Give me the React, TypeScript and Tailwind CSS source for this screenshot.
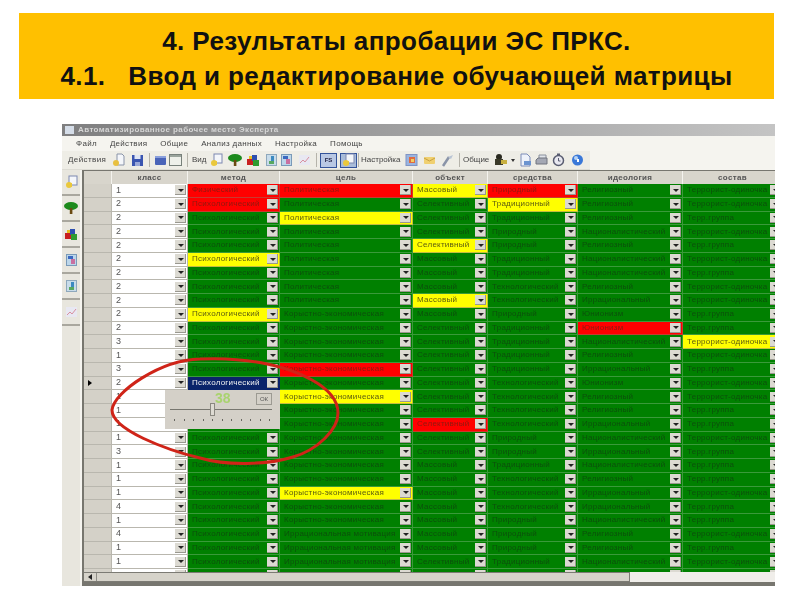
import React from "react";

const P = "Психологический";
const POL = "Политическая";
const KOR = "Корыстно-экономическая";
const IM = "Иррациональная мотивация";
const SEL = "Селективный";
const MAS = "Массовый";
const TR = "Традиционный";
const PR = "Природный";
const TE = "Технологический";
const RE = "Религиозный";
const NA = "Националистический";
const IR = "Иррациональный";
const YU = "Юнионизм";
const TO = "Террорист-одиночка";
const TG = "Терр.группа";

// text, then :r / :y / :n when the cell is not plain green
const rows: string[][] = [
  ["1", "Физический:r", POL + ":r", MAS + ":y", PR + ":r", RE, TO],
  ["2", P + ":r", POL, SEL, TR + ":y", RE, TO],
  ["2", P, POL + ":y", SEL, TR, RE, TG],
  ["2", P, POL, SEL, PR, NA, TO],
  ["2", P, POL, SEL + ":y", PR, RE, TG],
  ["2", P + ":y", POL, MAS, TR, NA, TO],
  ["2", P, POL, MAS, TR, NA, TG],
  ["2", P, POL, MAS, TE, RE, TO],
  ["2", P, POL, MAS + ":y", TE, IR, TO],
  ["2", P + ":y", KOR, MAS, PR, YU, TG],
  ["2", P, KOR, SEL, TR, YU + ":r", TG],
  ["3", P, KOR, SEL, TR, NA, TO + ":y"],
  ["1", P, KOR, SEL, TR, RE, TO],
  ["3", P, KOR + ":r", SEL, TR, IR, TG],
  ["2", P + ":n", KOR, SEL, TE, YU, TO],
  ["1", P, KOR + ":y", SEL, TE, RE, TO],
  ["1", P, KOR, SEL, TE, RE, TG],
  ["1", P, KOR, SEL + ":r", TE, IR, TG],
  ["1", P, KOR, SEL, PR, NA, TO],
  ["3", P, KOR, SEL, PR, IR, TG],
  ["1", P, KOR, MAS, TR, NA, TG],
  ["1", P, KOR, MAS, TE, RE, TG],
  ["1", P, KOR + ":y", MAS, TE, IR, TO],
  ["4", P, KOR, MAS, TE, IR, TG],
  ["1", P, KOR, MAS, PR, NA, TG],
  ["4", P, IM, MAS, PR, RE, TO],
  ["1", P, IM, MAS, PR, RE, TG],
  ["1", P, IM, SEL, TR, NA, TO],
  ["", "", "", "", "", "", ""],
];

const headers = ["класс", "метод", "цель", "объект", "средства", "идеология", "состав"];
const gridCols = "grid grid-cols-[28px_76px_92px_133px_75px_90px_105px_100px]";

const cellStyles: Record<string, string> = {
  g: "bg-[#008000] text-[#0b4f0b] border-[#3a9a3a]",
  r: "bg-[#ff0000] text-[#8c1a10] border-[#c83a30]",
  y: "bg-[#ffff00] text-[#5c5c10] border-[#c4bc40]",
  n: "bg-[#0a246a] text-[#f2f2f2] border-[#0a246a]",
};

const Arrow = () => (
  <span className="ml-auto flex h-[10px] w-[11px] shrink-0 items-center justify-center bg-[#dcdad2] shadow-[inset_-1px_-1px_0_#9a988f]">
    <span className="h-0 w-0 border-x-[3px] border-t-[3px] border-x-transparent border-t-[#222]" />
  </span>
);

const Cell = ({ value }: { value: string }) => {
  const [text, kind = "g"] = value.split(":");
  return (
    <div className={`flex items-center overflow-hidden border-r border-b pl-[4px] pr-[1px] ${cellStyles[kind]}`}>
      <span className="whitespace-nowrap text-[8px] tracking-[0.25px]">{text}</span>
      <Arrow />
    </div>
  );
};

type IconProps = { className?: string };

const Ico = ({ className, children, w = 13 }: IconProps & { children: React.ReactNode; w?: number }) => (
  <svg className={`shrink-0 ${className ?? ""}`} width={w} height="14" viewBox={`0 0 ${w} 14`}>
    {children}
  </svg>
);

const OpenDoc = (p: IconProps) => (
  <Ico {...p}>
    <path d="M5 1h5l2 2v9H5z" fill="#f4f6fa" stroke="#8a94a8" />
    <circle cx="4" cy="10" r="3" fill="#e8c040" />
  </Ico>
);
const Save = (p: IconProps) => (
  <Ico {...p}>
    <rect x="1" y="2" width="11" height="11" fill="#3a55b0" />
    <rect x="3.5" y="2" width="6" height="4" fill="#dfe6f4" />
    <rect x="4" y="9" width="5" height="4" fill="#9aa8d8" />
  </Ico>
);
const Card = (p: IconProps) => (
  <Ico {...p}>
    <rect x="1" y="3" width="11" height="9" rx="1" fill="#4a64b8" />
    <rect x="1" y="3" width="11" height="2" fill="#8aa0dc" />
  </Ico>
);
const Win = (p: IconProps) => (
  <Ico {...p}>
    <rect x="0.5" y="1.5" width="12" height="11" fill="#eef0ea" stroke="#77807a" />
    <rect x="1" y="2" width="11" height="2" fill="#9aa49c" />
  </Ico>
);
const Book = (p: IconProps) => (
  <Ico {...p}>
    <rect x="4" y="1" width="8" height="9" fill="#f4f6fa" stroke="#7c88b0" />
    <circle cx="4" cy="10" r="3" fill="#eac83c" />
    <rect x="2" y="8" width="5" height="4" fill="#eac83c" />
  </Ico>
);
const Tree = (p: IconProps) => (
  <Ico {...p} w={14}>
    <ellipse cx="7" cy="5" rx="7" ry="4" fill="#1c8a1c" />
    <rect x="5.8" y="7" width="2.6" height="6" fill="#6b4a12" />
  </Ico>
);
const Blocks = (p: IconProps) => (
  <Ico {...p} w={14}>
    <rect x="1" y="6" width="6" height="6" fill="#c82020" />
    <rect x="6" y="2" width="5" height="6" fill="#2d4fb0" />
    <rect x="7" y="7" width="6" height="6" fill="#2f9a30" />
    <rect x="3" y="3" width="3" height="3" fill="#e8c020" />
  </Ico>
);
const Grid1 = (p: IconProps) => (
  <Ico {...p}>
    <rect x="1.5" y="1.5" width="10" height="11" fill="#c8dcea" stroke="#8ea8bc" />
    <rect x="6" y="3" width="3" height="6" fill="#3c8ac0" />
    <rect x="4" y="8" width="5" height="3" fill="#58a860" />
  </Ico>
);
const Grid2 = (p: IconProps) => (
  <Ico {...p}>
    <rect x="1.5" y="1.5" width="10" height="11" fill="#bcd6ea" stroke="#7a9ab8" />
    <rect x="3" y="3" width="5" height="3" fill="#3a68c0" />
    <rect x="6" y="6" width="4" height="5" fill="#c870a0" />
  </Ico>
);
const Chart = (p: IconProps) => (
  <Ico {...p}>
    <rect x="1" y="2" width="11" height="10" fill="#e8e8f2" />
    <path d="M2 10l3-3 2 2 4-5" fill="none" stroke="#d890a0" />
  </Ico>
);
const Photo = (p: IconProps) => (
  <Ico {...p}>
    <rect x="1" y="1.5" width="11" height="11" fill="#9ab4e0" stroke="#7f94c4" />
    <rect x="4" y="4" width="6" height="6" fill="#e06c40" />
    <rect x="6" y="6" width="3" height="3" fill="#f0d060" />
  </Ico>
);
const Mail = (p: IconProps) => (
  <Ico {...p}>
    <rect x="1" y="4" width="11" height="7" rx="1" fill="#f0d070" />
    <path d="M1 5l5.5 3L12 5" fill="none" stroke="#c8a040" />
  </Ico>
);
const Wand = (p: IconProps) => (
  <Ico {...p}>
    <path d="M2 13L8 4" stroke="#8a94a8" strokeWidth="2.5" />
    <path d="M7 4l5-2-2 4z" fill="#b8c4d4" />
  </Ico>
);
const People = (p: IconProps) => (
  <Ico {...p} w={14}>
    <circle cx="5" cy="4" r="3" fill="#2a2a20" />
    <rect x="1" y="6" width="8" height="6" fill="#3a3a28" />
    <rect x="7" y="7" width="6" height="4" fill="#c8b040" />
  </Ico>
);
const Page = (p: IconProps) => (
  <Ico {...p}>
    <path d="M2 1h6l3 3v9H2z" fill="#eef2fa" stroke="#7c8cb8" />
    <rect x="5" y="8" width="7" height="4" fill="#6c94d0" />
  </Ico>
);
const Printer = (p: IconProps) => (
  <Ico {...p}>
    <path d="M4 2h7v4H4z" fill="#e0e4ea" stroke="#8a909c" />
    <path d="M1 7l2-2h9v6H1z" fill="#a4a8b4" stroke="#70747e" />
  </Ico>
);
const Clock = (p: IconProps) => (
  <Ico {...p}>
    <circle cx="6.5" cy="7.5" r="5" fill="#e8e8f0" stroke="#585c70" strokeWidth="1.5" />
    <rect x="5" y="0.5" width="3" height="2" fill="#585c70" />
    <path d="M6.5 5v3h2" fill="none" stroke="#585c70" />
  </Ico>
);
const Help = (p: IconProps) => (
  <Ico {...p}>
    <circle cx="6.5" cy="7" r="5.5" fill="#3a78d8" />
    <circle cx="5" cy="5" r="2" fill="#b8d4f4" />
    <rect x="6" y="6" width="2" height="3" fill="#ffffff" />
  </Ico>
);

const Sep = ({ className }: IconProps) => <span className={`h-[14px] w-px shrink-0 bg-[#b5b3aa] ${className ?? ""}`} />;

const SideIcon = ({ children }: { children: React.ReactNode }) => (
  <div className="flex h-[26px] shrink-0 flex-col items-center justify-center border-b-2 border-[#a9a79e]">{children}</div>
);

export default function App() {
  return (
    <div className="h-[600px] w-[800px] overflow-hidden bg-white font-['Liberation_Sans',Arial,sans-serif]">
      <div className="ml-[19px] mt-[13px] flex h-[86px] w-[755px] flex-col items-center justify-center bg-[#ffc000] pt-[5px] text-[26px] font-bold leading-[35px] tracking-[0.4px] text-[#111]">
        <div>4. Результаты апробации ЭС ПРКС.</div>
        <div className="whitespace-pre">4.1.   Ввод и редактирование обучающей матрицы</div>
      </div>

      <div className="relative ml-[62px] mt-[25px] h-[462px] w-[713px]">
        <div className="flex h-full w-full flex-col overflow-hidden blur-[0.45px]">
          <div className="flex h-[12px] shrink-0 items-center bg-gradient-to-r from-[#7f7f80] to-[#c4c4c4] pl-[3px]">
            <span className="mr-[4px] h-[8px] w-[9px] bg-[#d5dde8]" />
            <span className="text-[8px] font-bold tracking-[0.4px] text-[#d6d6d6]">Автоматизированное рабочее место Эксперта</span>
          </div>
          <div className="flex h-[15px] shrink-0 items-center gap-[13px] bg-[#f5f4ef] pl-[14px] text-[8px] tracking-[0.3px] text-[#444]">
            <span>Файл</span>
            <span>Действия</span>
            <span>Общие</span>
            <span>Анализ данных</span>
            <span>Настройка</span>
            <span>Помощь</span>
          </div>
          <div className="flex h-[19px] shrink-0 bg-[#f5f4ef]">
            <div className="flex w-[528px] items-center border-b border-[#dddcd4] bg-[#eeede6] pl-[6px] text-[8px] text-[#444]">
              <span className="w-[40px] tracking-[0.4px]">Действия</span>
              <OpenDoc className="ml-[4px]" />
              <Save className="ml-[6px]" />
              <Sep className="ml-[5px]" />
              <Card className="ml-[4px]" />
              <Win className="ml-[2px]" />
              <Sep className="ml-[5px]" />
              <span className="ml-[4px] w-[14px]">Вид</span>
              <Book className="ml-[4px]" />
              <Tree className="ml-[5px]" />
              <Blocks className="ml-[4px]" />
              <Grid1 className="ml-[5px]" />
              <Grid2 className="ml-[2px]" />
              <Chart className="ml-[5px]" />
              <Sep className="ml-[5px]" />
              <span className="ml-[3px] flex h-[15px] w-[17px] shrink-0 items-center justify-center border border-[#33539a] bg-[#b9c8e4] text-[6px] font-bold text-[#224]">FS</span>
              <span className="ml-[3px] flex h-[15px] w-[17px] shrink-0 items-center justify-center border border-[#33539a] bg-[#a9bcd9]">
                <Book />
              </span>
              <Sep className="ml-[1px]" />
              <span className="ml-[2px] w-[41px]">Настройка</span>
              <Photo className="ml-[3px]" />
              <Mail className="ml-[5px]" />
              <Wand className="ml-[5px]" />
              <Sep className="ml-[5px]" />
              <span className="ml-[3px] w-[27px]">Общие</span>
              <People className="ml-[4px]" />
              <span className="ml-[3px] h-0 w-0 shrink-0 border-x-[2px] border-t-[3px] border-x-transparent border-t-[#333]" />
              <Page className="ml-[4px]" />
              <Printer className="ml-[3px]" />
              <Clock className="ml-[4px]" />
              <Help className="ml-[6px]" />
            </div>
          </div>

          <div className="flex min-h-0 flex-1">
            <div className="flex w-[18px] shrink-0 flex-col bg-[#e8e6de]">
              <SideIcon><Book /></SideIcon>
              <SideIcon><Tree /></SideIcon>
              <SideIcon><Blocks /></SideIcon>
              <SideIcon><Grid2 /></SideIcon>
              <SideIcon><Grid1 /></SideIcon>
              <SideIcon><Chart /></SideIcon>
            </div>
            <div className="w-[2px] shrink-0 bg-[#f5f4ef]" />
            <div className="flex min-w-0 flex-1 flex-col border-l-2 border-t border-b-4 border-[#77766f] bg-[#d8d5cc]">
              <div className={`${gridCols} h-[13px] shrink-0`}>
                <div className="border-r border-[#f4f3ee]" />
                {headers.map((h) => (
                  <div key={h} className="flex items-center justify-center border-r border-[#f4f3ee] text-[8px] font-bold tracking-[0.3px] text-[#555]">
                    {h}
                  </div>
                ))}
              </div>
              <div className="min-h-0 flex-1 overflow-hidden">
                <div className={`${gridCols} auto-rows-[13.75px]`}>
                  {rows.map((r, i) => (
                    <React.Fragment key={i}>
                      <div className="flex items-center justify-center border-r border-b border-[#b9b7ae] bg-[#d4d1c8]">
                        {i === 14 && <span className="h-0 w-0 -translate-x-[8px] border-y-[3px] border-l-[4px] border-y-transparent border-l-black" />}
                      </div>
                      <div className="flex items-center border-r border-b border-[#b9b7ae] bg-white pl-[4px] pr-[1px]">
                        <span className="text-[9px] text-[#555]">{r[0]}</span>
                        <Arrow />
                      </div>
                      {r.slice(1).map((v, j) => (
                        <Cell key={j} value={v} />
                      ))}
                    </React.Fragment>
                  ))}
                </div>
              </div>
              <div className="flex h-[10px] shrink-0 bg-[#f0eeea]">
                <div className="flex w-[546px] items-center border-y border-r border-[#7c7b74] bg-[#d6d3ca] pl-[4px]">
                  <span className="h-0 w-0 border-y-[3px] border-r-[4px] border-y-transparent border-r-[#222]" />
                  <span className="ml-[4px] h-full w-px bg-[#8e8d86]" />
                </div>
              </div>
            </div>
          </div>
        </div>

        {/* slider popup over the method column */}
        <div className="absolute left-[103px] top-[266px] h-[39px] w-[115px] bg-[#d4d0c8] blur-[0.4px]">
          <div className="absolute left-[50px] top-0 text-[14px] font-bold leading-[17px] text-[#a9d36e]">38</div>
          <div className="absolute left-[91px] top-[3px] flex h-[12px] w-[16px] items-center justify-center border border-[#9c9a92] text-[6px] text-[#555]">ОК</div>
          <div className="absolute left-[5px] top-[19px] h-px w-[102px] bg-[#77766f]" />
          <div className="absolute left-[45px] top-[13px] h-[13px] w-[5px] border border-[#8a8880] bg-[#dedbd3]" />
          <div className="absolute left-[9px] top-[29px] flex w-[96px] justify-between">
            {Array.from({ length: 11 }).map((_, i) => (
              <span key={i} className="h-[2px] w-px bg-[#66655f]" />
            ))}
          </div>
        </div>

        {/* hand drawn red ellipse */}
        <svg className="pointer-events-none absolute left-0 top-0 blur-[0.4px]" width="713" height="462" viewBox="0 0 713 462">
          <path
            d="M50 286 C52 268 98 236 138 235 C180 233 222 240 250 256 C268 266 276 278 276 289 C276 306 255 326 231 333 C205 341 165 342 138 334 C105 326 50 306 50 286 Z"
            fill="none"
            stroke="#cf2418"
            strokeWidth="3"
          />
        </svg>
      </div>
    </div>
  );
}
